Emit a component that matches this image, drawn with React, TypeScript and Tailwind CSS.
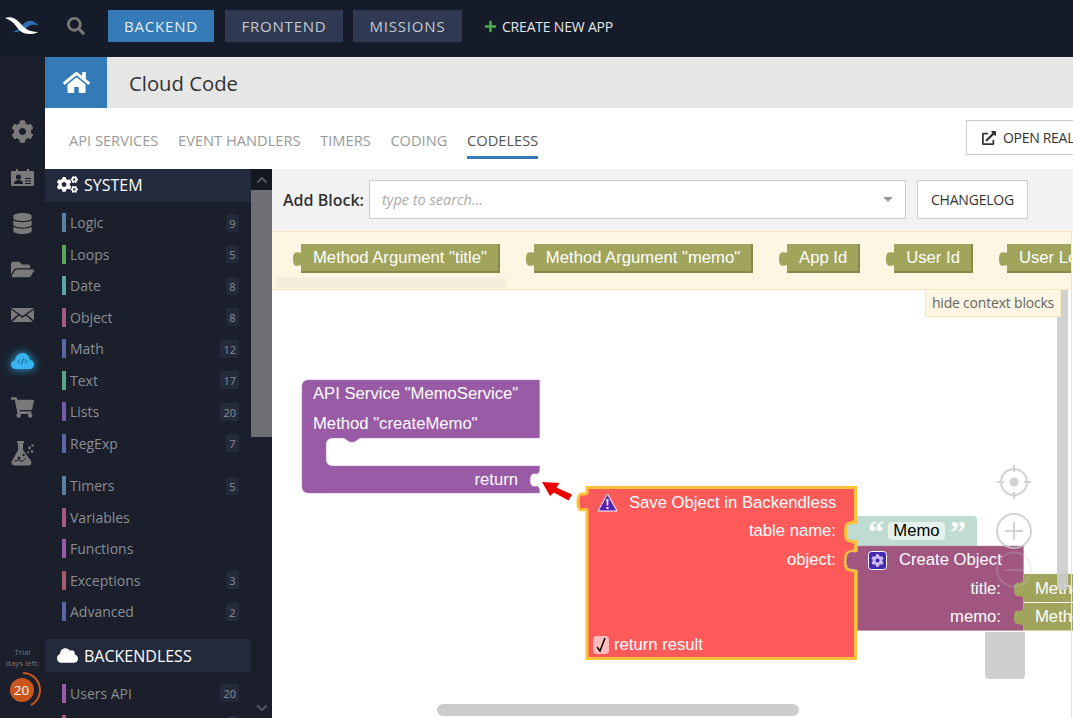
import type { ReactNode } from "react";
import { FaCog, FaCogs, FaCloud, FaDatabase, FaExternalLinkAlt, FaFolderOpen, FaHome, FaPlus, FaSearch, FaShoppingCart, FaChevronUp, FaChevronDown } from "react-icons/fa";

const groupOne = [
    { name: "Logic", count: 9, color: "bg-[#5b80a5]" },
    { name: "Loops", count: 5, color: "bg-[#5ba55b]" },
    { name: "Date", count: 8, color: "bg-[#5ba5a5]" },
    { name: "Object", count: 8, color: "bg-[#a55b80]" },
    { name: "Math", count: 12, color: "bg-[#5b67a5]" },
    { name: "Text", count: 17, color: "bg-[#5ba58c]" },
    { name: "Lists", count: 20, color: "bg-[#745ba5]" },
    { name: "RegExp", count: 7, color: "bg-[#5b67a5]" },
];

const groupTwo = [
    { name: "Timers", count: 5, color: "bg-[#5b80a5]" },
    { name: "Variables", color: "bg-[#a55b80]" },
    { name: "Functions", color: "bg-[#995ba5]" },
    { name: "Exceptions", count: 3, color: "bg-[#a55b6f]" },
    { name: "Advanced", count: 2, color: "bg-[#5b67a5]" },
];

// the second row is scrolled off, only the tops of its bar and badge show
const groupThree = [
    { name: "Users API", count: "20", color: "bg-[#995ba5]" },
    { name: "", count: "", color: "bg-[#a55b80]" },
];

const contextBlocks = ['Method Argument "title"', 'Method Argument "memo"', "App Id", "User Id", "User Login"];

function Logo() {
    return (
        <svg width="34" height="18" viewBox="0 0 34 18">
            <path d="M7 15 C10 15 14 12 17 8 C21 4 24 3 27 4 C30 5 32 6 33 9 C30 7 27 7 24 9 C20 12 14 16 7 15 Z" fill="#2f6db5" />
            <path d="M0 1 C7 -1 11 2 15 6 C19 11 24 15 33 15 C32 16 28 17 24 17 C17 17 14 13 11 9 C8 5 5 3 0 1 Z" fill="#fff" />
        </svg>
    );
}

function IdCardIcon() {
    return (
        <svg width="23" height="18" viewBox="0 0 23 18" fill="#7a7a7a">
            <path d="M1 3 h4 v-2 h2 v2 h9 v-2 h2 v2 h4 a1 1 0 0 1 1 1 v13 a1 1 0 0 1 -1 1 h-21 a1 1 0 0 1 -1 -1 v-13 a1 1 0 0 1 1 -1 Z" />
            <circle cx="7.500" cy="9" r="2.600" fill="#1a1f2b" />
            <path d="M3 16 c0 -3 2 -4 4.500 -4 s4.500 1 4.500 4 Z" fill="#1a1f2b" />
            <path d="M14 10 h6 v1 h-6 Z M14 12.500 h6 v1 h-6 Z M14 15 h6 v1 h-6 Z" fill="#1a1f2b" />
        </svg>
    );
}

function EnvelopeIcon() {
    return (
        <svg width="23" height="14" viewBox="0 0 23 14" fill="#7a7a7a">
            <path d="M0 0 H23 L11.500 8 Z" />
            <path d="M0 1.500 L7 6.500 L0 12.500 Z M23 1.500 L16 6.500 L23 12.500 Z" />
            <path d="M1 14 L8 7.500 L11.500 10 L15 7.500 L22 14 Z" />
        </svg>
    );
}

function CloudCodeIcon() {
    return (
        <svg width="23" height="16" viewBox="0 0 23 16" className="drop-shadow-[0_0_5px_#2fb4f0]">
            <path d="M5 16 C1 16 0 13.500 0 11.500 C0 9 2 7.500 4 7.500 C4.500 3 8 0 11.500 0 C15 0 18 2.500 18.500 6.500 C21 7 23 9 23 11.500 C23 14 21 16 18 16 Z" fill="#39b4ef" />
            <path d="M9 6.500 L7 8.500 L9 10.500 M14 6.500 L16 8.500 L14 10.500 M12.500 5.500 L10.500 11.500" fill="none" stroke="#12608f" strokeWidth="1" />
        </svg>
    );
}

function FlaskIcon() {
    return (
        <svg width="23" height="25" viewBox="0 0 23 25" fill="#7a7a7a">
            <path d="M6 0 H13 V2 H12 V9 L20 20 Q21.500 23.500 18 24.500 H3 Q-0.500 23.500 1 20 L7 9 V2 H6 Z" />
            <circle cx="8" cy="17" r="1.500" fill="#1a1f2b" />
            <circle cx="12.500" cy="14" r="1.200" fill="#1a1f2b" />
            <path d="M3.500 20 L7.500 19 L11 20.500 L15 17" fill="none" stroke="#1a1f2b" strokeWidth="1" />
            <circle cx="18.500" cy="7" r="1.400" />
            <circle cx="21.500" cy="4.500" r="1.200" />
            <circle cx="21" cy="10.500" r="1.300" />
            <circle cx="17" cy="11.500" r="1" />
        </svg>
    );
}

function RailItem({ children }: { children: ReactNode }) {
    return <div className="h-[46px] flex items-center justify-center pr-px text-[#7a7a7a]">{children}</div>;
}

function TreeRow({ name, count, color }: { name: string; count?: number | string; color: string }) {
    return (
        <div className="h-[31.5px] shrink-0 flex items-center pl-[17px] pr-[12px]">
            <span className={`w-[4px] h-[19px] mr-[4px] ${color}`} />
            <span className="flex-1 text-[14px] text-[#8a8d94]">{name}</span>
            {count !== undefined && (
                <span className="h-[18px] min-w-[13px] px-[3px] rounded-[3px] bg-[#242a3a] text-[11px] leading-[19px] text-center text-[#8a8d94]">{count}</span>
            )}
        </div>
    );
}

function TreeHeader({ icon, title, nudge }: { icon: ReactNode; title: string; nudge: string }) {
    return (
        <div className={`h-[33px] shrink-0 flex items-center gap-[6px] pl-[12px] bg-[#232a3b] text-white text-[16px] ${nudge}`}>
            {icon}
            <span>{title}</span>
        </div>
    );
}

function ContextBlock({ label }: { label: string }) {
    return (
        <div className="flex items-center shrink-0 mr-[26px]">
            <svg width="9" height="18" viewBox="0 0 9 18" className="-mr-px shrink-0">
                <path d="M9 0 c0 2 -1 3 -3 2.500 c-4 -1 -6 .5 -6 6.500 c0 6 2 7.500 6 6.500 c2 -.5 3 .5 3 2.500 Z" fill="#a0a55b" />
            </svg>
            <div className="h-[29px] pl-[12px] pr-[11px] flex items-center bg-[#a0a55b] border-b-2 border-r-2 border-[#85894c] font-['Liberation_Sans'] text-[16.67px] text-white whitespace-nowrap">
                {label}
            </div>
        </div>
    );
}

function Canvas() {
    return (
        <svg width="801" height="428" viewBox="272 290 801 428" className="absolute left-0 top-0 font-['Liberation_Sans'] text-[16.67px] fill-white">
            {/* service block */}
            <path
                d="M302 386 a6 6 0 0 1 6 -6 H539.500 V438 H360 L354 442 H350 L344 438 H332 a6 6 0 0 0 -6 6 V460 a6 6 0 0 0 6 6 H539.500 V470 Q539 475 535 473.500 Q530 473 530 480 Q530 487 535 486.500 Q539 485 539.500 490 V493 H308 a6 6 0 0 1 -6 -6 Z"
                fill="#995ba5"
                stroke="#ad7bb7"
                strokeWidth=".5"
            />
            <text x="313" y="399">API Service "MemoService"</text>
            <text x="313" y="429">Method "createMemo"</text>
            <text x="518" y="485" textAnchor="end">return</text>

            {/* arrow */}
            <polygon points="542,482 559.500,483 556.500,487.500 572,494.500 568.500,500.500 554,492.500 550,496" fill="#ee0000" />

            {/* trash lid */}
            <path d="M985 632 H1025 V675 a4 4 0 0 1 -4 4 H989 a4 4 0 0 1 -4 -4 Z" fill="#cfcfcf" />

            {/* text value */}
            <path d="M857 516 H973 a4 4 0 0 1 4 4 V546 H857 V541 c-2 3 -3 0 -5 0 c-4 0 -6 -2 -6 -9 c0 -7 2 -9 6 -9 c2 0 3 -2 5 -1 Z" fill="#bfdbd2" />
            <rect x="888" y="522" width="57" height="18" rx="4" fill="#e4f1ed" />
            <text x="916.500" y="536" textAnchor="middle" className="fill-black">Memo</text>
            <text x="868" y="543" className="fill-white font-['Liberation_Serif'] font-bold text-[32px]">“</text>
            <text x="950" y="543" className="fill-white font-['Liberation_Serif'] font-bold text-[32px]">”</text>

            {/* save block */}
            <path
                d="M587 487.500 H855.500 V522 c-2 -1 -3 1 -5 1 c-4 0 -5 2 -5 9 c0 7 1 9 5 9 c2 0 3 2 5 1 V551 c-2 -1 -3 1 -5 1 c-4 0 -5 2 -5 9 c0 7 1 9 5 9 c2 0 3 2 5 1 V658.500 H587 V510 c-2 -2 -3 0 -5 0 c-3 0 -4 -2 -4 -8 c0 -6 1 -8 4 -8 c2 0 3 1 5 -1 Z"
                fill="#ff5a5a"
                stroke="#fcc23a"
                strokeWidth="3"
            />
            <path d="M607.500 494 L617 511 H598 Z" fill="#5a22b0" stroke="#fff" strokeWidth="1" strokeLinejoin="round" />
            <path d="M606.500 499 h2 l-.3 6.500 h-1.400 Z M606.500 507 h2 v2 h-2 Z" fill="#fff" />
            <text x="629" y="507.500">Save Object in Backendless</text>
            <text x="836" y="536" textAnchor="end">table name:</text>
            <text x="836" y="565" textAnchor="end">object:</text>
            <rect x="593" y="636" width="16" height="18" rx="4" fill="#ffbdbd" />
            <path d="M597 647 L600 651 L605 638" fill="none" stroke="#000" strokeWidth="1.500" />
            <text x="614" y="650">return result</text>

            {/* create object block */}
            <path
                d="M857.500 546 H1023.500 V630.500 H857.500 V570 c-2 0 -3 -1 -5 -1 c-4 0 -6 -1 -6 -8 c0 -7 2 -9 6 -9 c2 0 3 1 5 0 Z"
                fill="#a0567f"
                stroke="#b886a2"
                strokeWidth=".5"
            />
            <rect x="868.500" y="551.500" width="18" height="18" rx="3" fill="#4527b0" stroke="#fff" strokeWidth="1" />
            <FaCog x="871" y="554" size={13} color="#cbbcf0" />
            <text x="899" y="565">Create Object</text>
            <text x="1001" y="594" textAnchor="end">title:</text>
            <text x="1001" y="622" textAnchor="end">memo:</text>

            {/* method argument values */}
            <path d="M1024 574 H1080 V602 H1024 V597 c-2 0 -3 0 -4 -1 c-4 1 -6 -1 -6 -7 c0 -6 2 -7 6 -6 c1 -1 2 -1 4 -2 Z" fill="#a0a55b" />
            <path d="M1024 603 H1080 V630.500 H1024 V625 c-2 0 -3 0 -4 -1 c-4 1 -6 -1 -6 -7 c0 -6 2 -7 6 -6 c1 -1 2 -1 4 -2 Z" fill="#a0a55b" />
            <text x="1035" y="594">Method</text>
            <text x="1035" y="622">Method</text>

            {/* zoom controls */}
            <g fill="none" stroke="#c8c8c8" strokeWidth="2" opacity=".8">
                <circle cx="1014" cy="482" r="13" />
                <path d="M1014 465 V472 M1014 492 V499 M997 482 H1004 M1024 482 H1031" />
                <circle cx="1014" cy="482" r="4.500" fill="#c8c8c8" stroke="none" />
                <circle cx="1014" cy="531" r="17" />
                <path d="M1005 531 H1023 M1014 522 V540" />
                <circle cx="1014" cy="569.500" r="17" opacity=".3" />
                <path d="M1005 570 H1023" opacity=".3" />
            </g>
        </svg>
    );
}

export default function App() {
    return (
        <div className="w-[1073px] h-[718px] flex flex-col overflow-hidden bg-[#161b29] font-['Open_Sans',sans-serif]">
            {/* Top nav */}
            <header className="h-[57px] shrink-0 flex items-start">
                <div className="w-[45px] h-[52px] flex items-center pl-[5px]">
                    <Logo />
                </div>
                <div className="w-[63px] h-[52px] flex items-center justify-center pr-[2px] text-[#777]">
                    <FaSearch size={18} />
                </div>
                <div className="flex items-center pt-[10px]">
                    <div className="h-[32px] w-[106px] flex items-center justify-center bg-[#337ab7] text-[#e8eef5] text-[15px] tracking-[0.8px]">BACKEND</div>
                    <div className="ml-[11px] h-[32px] w-[118px] flex items-center justify-center bg-[#2f3a52] text-[#c4c8d0] text-[15px] tracking-[0.8px]">FRONTEND</div>
                    <div className="ml-[10px] h-[32px] w-[109px] flex items-center justify-center bg-[#2f3a52] text-[#c4c8d0] text-[15px] tracking-[0.8px]">MISSIONS</div>
                    <div className="ml-[22px] h-[32px] flex items-center gap-[5px] text-[#e4e6ea] text-[14px] tracking-[-0.2px]">
                        <FaPlus size={13} className="text-[#4cae4c]" />
                        CREATE NEW APP
                    </div>
                </div>
            </header>

            <div className="flex-1 flex min-h-0">
                {/* Left rail */}
                <aside className="w-[45px] shrink-0 flex flex-col pt-[51px] pb-[14px] bg-[#1a1f2b]">
                    <RailItem><FaCog size={23} /></RailItem>
                    <RailItem><IdCardIcon /></RailItem>
                    <RailItem><FaDatabase size={21} /></RailItem>
                    <RailItem><FaFolderOpen size={23} /></RailItem>
                    <RailItem><EnvelopeIcon /></RailItem>
                    <RailItem><CloudCodeIcon /></RailItem>
                    <RailItem><FaShoppingCart size={23} /></RailItem>
                    <RailItem><FlaskIcon /></RailItem>
                    <div className="mt-auto flex flex-col items-center">
                        <div className="text-[8px] leading-[11px] text-center text-[#777] whitespace-nowrap">
                            Trial<br />days left:
                        </div>
                        <div className="relative mt-[7px] w-[30px] h-[30px] -mb-[1px]">
                            <svg width="36" height="36" viewBox="0 0 36 36" className="absolute -left-[3px] -top-[3px]">
                                <path d="M18 1 A17 17 0 0 1 26 33" fill="none" stroke="#c9561c" strokeWidth="2" />
                            </svg>
                            <div className="absolute left-[2px] top-[3px] w-[24px] h-[24px] rounded-full bg-[#c9561c] text-white text-[13.5px] leading-[24px] text-center">20</div>
                        </div>
                    </div>
                </aside>

                {/* Main */}
                <main className="w-[1028px] shrink-0 flex flex-col min-h-0 bg-white">
                    <div className="h-[51px] shrink-0 flex items-center bg-[#e6e6e6]">
                        <div className="w-[62px] h-full flex items-center justify-center bg-[#337ab7] text-white">
                            <FaHome size={27} />
                        </div>
                        <h1 className="ml-[22px] pt-[2px] text-[20.3px] text-[#333]">Cloud Code</h1>
                    </div>

                    <div className="h-[61px] shrink-0 flex pl-[24px] pt-[12px] overflow-hidden text-[14.65px] text-[#999] whitespace-nowrap">
                        <div className="w-[472px] shrink-0 flex gap-[19.7px] h-[38px] items-center pt-[4px]">
                            <span>API SERVICES</span>
                            <span>EVENT HANDLERS</span>
                            <span>TIMERS</span>
                            <span>CODING</span>
                            <span className="h-[35px] -mb-[1px] flex items-center pt-[1px] border-b-[3px] border-[#337ab7] text-[#555]">CODELESS</span>
                        </div>
                        <div className="ml-[425px] shrink-0 h-[35px] px-[15px] flex items-center gap-[7px] border border-[#ccc] text-[#333] text-[14px] tracking-[-0.3px]">
                            <FaExternalLinkAlt size={14} />
                            OPEN REALTIME LOGGING
                        </div>
                    </div>

                    <div className="flex-1 flex min-h-0">
                        {/* Block tree */}
                        <div className="w-[206px] shrink-0 flex flex-col overflow-hidden bg-[#1a1f2b]">
                            <TreeHeader icon={<FaCogs size={21} />} title="SYSTEM" nudge="pb-[2px]" />
                            <div className="h-[5px] shrink-0" />
                            {groupOne.map((row) => <TreeRow key={row.name} {...row} />)}
                            <div className="h-[11px] shrink-0" />
                            {groupTwo.map((row) => <TreeRow key={row.name} {...row} />)}
                            <div className="h-[11px] shrink-0" />
                            <TreeHeader icon={<FaCloud size={21} />} title="BACKENDLESS" nudge="pt-[1px]" />
                            <div className="h-[6px] shrink-0" />
                            {groupThree.map((row) => <TreeRow key={row.name} {...row} />)}
                        </div>

                        {/* Tree scrollbar */}
                        <div className="w-[21px] shrink-0 flex flex-col bg-[#1a1f2b] text-[#555a64]">
                            <div className="h-[21px] flex items-center justify-center bg-[#141822]"><FaChevronUp size={12} /></div>
                            <div className="h-[247px] bg-[#6f7075]" />
                            <div className="mt-auto h-[21px] flex items-center justify-center"><FaChevronDown size={12} /></div>
                        </div>

                        {/* Workspace */}
                        <div className="flex-1 flex flex-col min-w-0 overflow-hidden">
                            <div className="h-[62px] shrink-0 flex items-start pt-[11px] pl-[11px] bg-[#f2f2f2] whitespace-nowrap">
                                <label className="w-[86px] shrink-0 h-[39px] flex items-center text-[16px] font-semibold text-[#333]">Add Block:</label>
                                <div className="w-[537px] h-[39px] flex items-center justify-between px-[12px] bg-white border border-[#ccc]">
                                    <span className="text-[14.5px] italic text-[#aaa]">type to search...</span>
                                    <span className="w-0 h-0 border-x-[5px] border-t-[5px] border-x-transparent border-t-[#999]" />
                                </div>
                                <div className="ml-[11px] w-[111px] h-[39px] flex items-center justify-center bg-white border border-[#ccc] text-[14px] text-[#333] tracking-[-0.2px]">CHANGELOG</div>
                            </div>

                            <div className="h-[59px] shrink-0 relative flex items-start pt-[12px] pl-[21px] overflow-hidden bg-[#fdf6e3] border border-[#f5e8bc] -ml-px mr-px">
                                {contextBlocks.map((label) => <ContextBlock key={label} label={label} />)}
                                <div className="absolute left-[3px] bottom-[1px] w-[232px] h-[11px] rounded-full bg-[#f5eedc]" />
                            </div>

                            <div className="relative flex-1 min-h-0">
                                <Canvas />
                                <div className="absolute right-[5px] top-0 w-[11px] h-[300px] rounded-b-[4px] bg-[#cccccc]/90" />
                                <div className="absolute right-[1px] top-0 bottom-0 w-px bg-[#e5e5e5]" />
                                <div className="absolute left-[653px] top-0 w-[136px] h-[27px] flex items-center justify-center pb-px bg-[#fdf6e3] border-x border-b border-[#f5e8bc] text-[14px] text-[#666] tracking-[-0.2px] whitespace-nowrap">hide context blocks</div>
                                <div className="absolute left-[165px] bottom-[2px] w-[362px] h-[12px] rounded-full bg-[#cccccc]" />
                            </div>
                        </div>
                    </div>
                </main>
            </div>
        </div>
    );
}
